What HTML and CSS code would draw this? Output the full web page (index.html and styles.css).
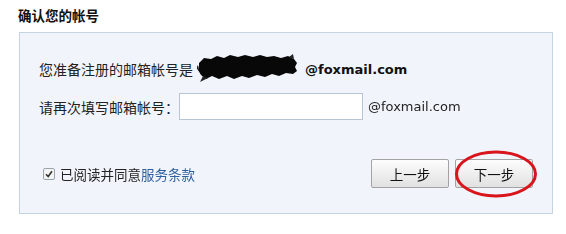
FILE: index.html
```html
<!DOCTYPE html>
<html lang="zh-CN">
  <head>
    <meta charset="UTF-8" />
    <meta name="viewport" content="width=device-width, initial-scale=1.0" />
    <title>确认您的帐号</title>

    <link rel="stylesheet" href="styles.css">
  </head>
  <body>
    <h2 class="title">确认您的帐号</h2>

    <div class="panel">
      <div class="row row-email">
        <span class="label">您准备注册的邮箱帐号是</span>
        <span class="masked">
          <svg width="102" height="30" viewBox="0 0 102 30">
            <path d="M2 10 L7 5 L14 6 L20 3 L27 5 L33 2 L41 4 L48 2 L56 4 L63 2 L70 4 L77 3 L84 5 L91 3 L97 6 L100 10 L98 14 L100 18 L96 21 L89 20 L82 23 L75 21 L68 24 L60 22 L52 25 L45 23 L37 26 L30 23 L22 26 L15 23 L9 26 L4 22 L1 17 L2 13 Z" fill="#080808" />
            <path d="M1 12 L-1 15 L2 18 Z M6 23 L3 29 L11 25 Z M92 4 L96 1 L97 6 Z" fill="#222" />
          </svg>
        </span>
        <b class="addr">@foxmail.com</b>
      </div>

      <div class="row row-confirm">
        <span class="label">请再次填写邮箱帐号：</span>
        <input class="field" type="text" autofocus />
        <span class="suffix">@foxmail.com</span>
      </div>

      <div class="row row-foot">
        <label class="agree">
          <span class="check">
            <svg width="8" height="8" viewBox="0 0 8 8"><path d="M1 4.2 L3.2 6.5 L7 1.2" fill="none" stroke="#333" stroke-width="1.6" /></svg>
          </span>
          已阅读并同意<a class="terms" href="#">服务条款</a>
        </label>

        <div class="actions">
          <button class="btn">上一步</button>
          <span class="next-wrap">
            <button class="btn">下一步</button>
            <svg class="mark" width="84" height="50" viewBox="0 0 84 50">
              <ellipse cx="42" cy="25" rx="39.5" ry="22" fill="none" stroke="#d8141c" stroke-width="3" />
            </svg>
          </span>
        </div>
      </div>
    </div>
  </body>
</html>
```

FILE: styles.css
```css
body {
  margin: 0;
  background-color: #fff;
  font-family: "Noto Sans CJK SC", "DejaVu Sans", sans-serif;
  font-size: 14px;
  color: #222;
}

.title {
  margin: 0;
  padding: 7px 0 0 18px;
  height: 25px;
  font-size: 13.5px;
  line-height: 16px;
  font-weight: bold;
  color: #111;
}

.panel {
  margin-left: 19px;
  width: 532px;
  border: 1px solid #c4d3e0;
  background-color: #f1f5fb;
  padding: 26px 0 25px 0;
}

.row {
  display: flex;
  align-items: center;
  padding: 0 19px;
}

.label {
  font-family: "Noto Sans CJK SC", sans-serif;
  font-size: 14px;
  color: #222;
}

.row-email {
  height: 20px;
}

.masked {
  display: inline-block;
  margin-left: 4px;
  height: 20px;
  position: relative;
  width: 108px;
}

.masked svg {
  position: absolute;
  left: 0;
  top: -6px;
  filter: blur(0.6px);
}

.addr {
  font-family: "DejaVu Sans", sans-serif;
  font-size: 13px;
  font-weight: bold;
  color: #111;
}

.row-confirm {
  margin-top: 14px;
  height: 27px;
}

.field {
  margin: 0;
  width: 174px;
  height: 25px;
  padding: 0 4px;
  box-sizing: content-box;
  border: 1px solid #b7c5d2;
  background-color: #fff;
  outline: none;
  font-size: 14px;
  caret-color: #000;
}

.suffix {
  margin-left: 5px;
  font-family: "DejaVu Sans", sans-serif;
  font-size: 13px;
  color: #222;
}

.row-foot {
  margin-top: 39px;
  justify-content: space-between;
  height: 29px;
}

.agree {
  display: flex;
  align-items: center;
  margin-left: 4px;
  font-size: 13.5px;
  color: #222;
  cursor: pointer;
}

.check {
  width: 10px;
  height: 10px;
  border: 1px solid #9aa4ad;
  border-radius: 2px;
  background-color: #f4f4f4;
  display: flex;
  align-items: center;
  justify-content: center;
  margin-right: 5px;
}

.terms {
  color: #2e5f9e;
  text-decoration: none;
}

.actions {
  display: flex;
  gap: 6px;
}

.next-wrap {
  position: relative;
  display: inline-block;
}

.btn {
  width: 78px;
  height: 29px;
  border: 1px solid #a3a3a3;
  border-radius: 2px;
  background: linear-gradient(#fdfdfd, #ececec 60%, #e1e1e1);
  font-family: "Noto Sans CJK SC", sans-serif;
  font-size: 13.5px;
  color: #111;
  cursor: pointer;
  padding: 0;
}

.mark {
  position: absolute;
  left: -1px;
  top: -10px;
  pointer-events: none;
}
```
